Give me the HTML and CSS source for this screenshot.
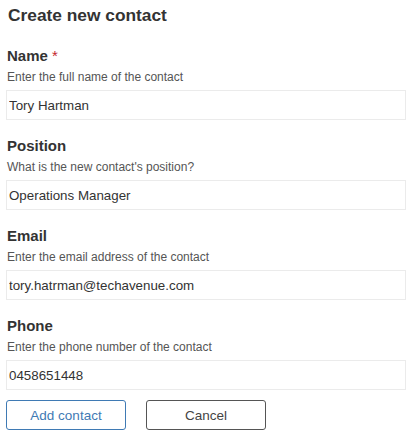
FILE: index.html
```html
<!DOCTYPE html>
<html>
<head>
<meta charset="utf-8">
<link rel="stylesheet" href="styles.css">
</head>
<body>
<form class="contact-form">
  <h1 class="form-title">Create new contact</h1>
  <div class="field">
    <label class="field-label">Name <span class="required">*</span></label>
    <div class="field-help">Enter the full name of the contact</div>
    <input class="field-input" type="text" value="Tory Hartman">
  </div>
  <div class="field">
    <label class="field-label">Position</label>
    <div class="field-help">What is the new contact's position?</div>
    <input class="field-input" type="text" value="Operations Manager">
  </div>
  <div class="field">
    <label class="field-label">Email</label>
    <div class="field-help">Enter the email address of the contact</div>
    <input class="field-input" type="text" value="tory.hatrman@techavenue.com">
  </div>
  <div class="field">
    <label class="field-label">Phone</label>
    <div class="field-help">Enter the phone number of the contact</div>
    <input class="field-input" type="text" value="0458651448">
  </div>
  <div class="actions">
    <button type="button" class="btn btn-primary">Add contact</button>
    <button type="button" class="btn btn-secondary">Cancel</button>
  </div>
</form>
</body>
</html>
```
FILE: styles.css
```css
html, body {
  margin: 0;
  padding: 0;
  background: #ffffff;
}
body {
  font-family: "Liberation Sans", Arial, sans-serif;
  color: #333333;
}
.contact-form {
  display: flex;
  flex-direction: column;
  padding: 0 6px;
  width: 400px;
}
.form-title {
  margin: 0;
  padding: 3px 0 0 2px;
  font-size: 17.33px;
  line-height: 24px;
  font-weight: bold;
  color: #333333;
}
.field {
  display: flex;
  flex-direction: column;
  margin-top: 20px;
}
.field + .field {
  margin-top: 17px;
}
.field-label {
  display: block;
  font-size: 15px;
  line-height: 18px;
  font-weight: bold;
  color: #333333;
  padding-left: 1px;
  margin-bottom: 4.5px;
}
.required {
  color: #c4262e;
  font-weight: normal;
}
.field-help {
  font-size: 12px;
  line-height: 15px;
  color: #555555;
  padding-left: 1px;
  margin-bottom: 5.5px;
}
.field-input {
  box-sizing: border-box;
  width: 400px;
  height: 30px;
  margin: 0;
  padding: 0 2px;
  border: 1px solid #ebebeb;
  border-radius: 0;
  background: #ffffff;
  font-family: "Liberation Sans", Arial, sans-serif;
  font-size: 13.33px;
  color: #333333;
  outline: none;
}
.actions {
  display: flex;
  gap: 20px;
  margin-top: 10px;
}
.btn {
  box-sizing: border-box;
  width: 120px;
  height: 30px;
  border-radius: 3px;
  background: #ffffff;
  font-family: "Liberation Sans", Arial, sans-serif;
  font-size: 13.5px;
  padding: 0;
}
.btn-primary {
  border: 1px solid #3f7ab4;
  color: #3f7ab4;
}
.btn-secondary {
  border: 1px solid #555555;
  color: #444444;
}
```
